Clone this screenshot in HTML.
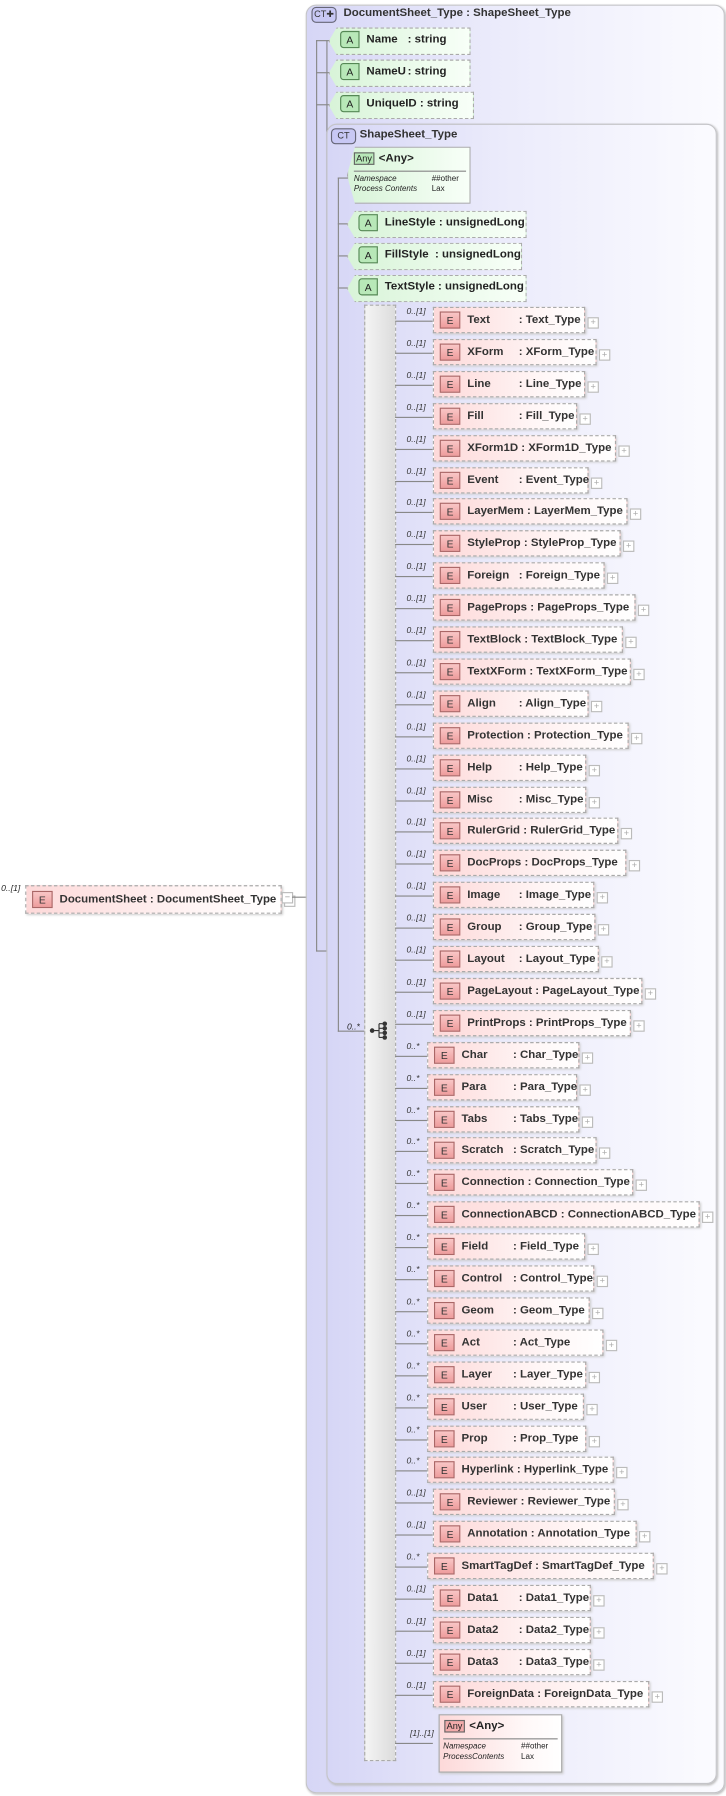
<!DOCTYPE html>
<html><head><meta charset="utf-8"><style>
html,body{margin:0;padding:0;background:#fff;width:726px;height:1795px;overflow:hidden}
#st{position:absolute;left:0;top:0;width:634px;height:1568px;transform:scale(1.14511);transform-origin:0 0;font-family:"Liberation Sans",Arial,sans-serif;color:#222}
.bx{position:absolute;border:1px solid #c4c4c8;border-radius:9px;background:linear-gradient(90deg,#d6d6f6 0%,#ebebfb 45%,#fbfbff 100%);box-shadow:1px 1px 2px #bbb}
.ct{position:absolute;width:20px;height:12px;border:1px solid #667;border-radius:4px;background:#c8c8f4;font-size:8px;line-height:12px;text-align:center;color:#333}
.t{position:absolute;font-weight:bold;font-size:10px;white-space:nowrap;color:#333}
.ln{position:absolute;background:#888}
.at{position:absolute;height:22px;background:linear-gradient(90deg,#d8f4d8,#f8fff8);border:1px dashed #aaa;box-shadow:1px 1px 2px #ccc;font-weight:bold;font-size:10px;line-height:20px;white-space:nowrap;clip-path:polygon(7px 0,100% 0,100% 100%,7px 100%,0 50%)}
.ai{display:inline-block;width:15px;height:13px;border:1px solid #585;background:#b8e8b8;text-align:center;font-size:9px;line-height:14px;font-weight:normal;vertical-align:middle;margin:0 6px 0 9px;border-radius:3px 0 0 3px}
.an{display:inline-block;min-width:34px}
.r{position:absolute;left:345px;height:22px;width:280px}
.r:before{content:'';position:absolute;left:0;top:12px;width:33px;border-top:1px solid #888}
.r i{position:absolute;top:-1px;font-size:7.5px;font-style:italic;color:#333;white-space:nowrap}
.e{position:absolute;top:0;height:21px;background:linear-gradient(90deg,#fdd9d9,#fff6f6 70%,#fff);border:1px dashed #aaa;box-shadow:1px 1px 2px #ccc;font-weight:bold;font-size:10px;line-height:21px;white-space:nowrap;color:#333}
.e:after{content:'+';position:absolute;right:-13px;top:8px;width:8px;height:8px;border:1px solid #bbb;background:#fff;font-size:8px;line-height:8px;text-align:center;color:#aaa;font-weight:normal}
.ei{display:inline-block;width:16px;height:13px;border:1px solid #a66;background:linear-gradient(#f9c6c6,#ee9c9c);text-align:center;font-size:9px;line-height:14px;font-weight:normal;vertical-align:middle;margin:0 6px 0 5px;color:#333}
.en{display:inline-block;min-width:45px}
.any{position:absolute;border:1px solid #aaa;box-shadow:1px 1px 2px #ccc;font-size:10px}
.any .h{font-weight:bold;margin:4px 0 0 4px}
.any .k{display:inline-block;border:1px solid #666;font-size:8px;padding:0 1px;margin-right:4px;font-weight:normal}
.any .d{border-top:1px solid #888;margin:5px 3px 0 3px;font-size:7px;padding-top:2px;line-height:9px}
.any .d span{display:inline-block;width:68px;font-style:italic}
</style></head><body><div id="st">

<!-- left element -->
<div style="position:absolute;left:1px;top:771px;font-size:7.5px;font-style:italic">0..[1]</div>
<div class="e" style="left:22px;top:773px;width:222px;height:23px;line-height:23px"><span class="ei">E</span>DocumentSheet : DocumentSheet_Type</div>
<div style="position:absolute;left:246px;top:779px;width:8px;height:8px;border:1px solid #bbb;background:#fff;font-size:8px;line-height:7px;text-align:center;color:#999">−</div>
<div class="ln" style="left:255px;top:783px;width:21px;height:1px"></div>

<!-- outer box -->
<div class="bx" style="left:267px;top:4px;width:364px;height:1560px"></div>
<div class="ct" style="left:272px;top:6px">CT✚</div>
<div class="t" style="left:300px;top:6px">DocumentSheet_Type : ShapeSheet_Type</div>

<div class="ln" style="left:276px;top:35px;width:1px;height:796px"></div>
<div class="ln" style="left:285px;top:35px;width:1px;height:796px"></div>
<div class="ln" style="left:276px;top:830px;width:10px;height:1px"></div>
<div class="ln" style="left:276px;top:35px;width:12px;height:1px"></div>
<div class="ln" style="left:276px;top:63px;width:12px;height:1px"></div>
<div class="ln" style="left:276px;top:91px;width:12px;height:1px"></div>

<div class="at" style="left:287px;top:24px;width:122px"><span class="ai">A</span><span class="an" style="min-width:36px">Name</span>: string</div>
<div class="at" style="left:287px;top:52px;width:122px"><span class="ai">A</span><span class="an" style="min-width:36px">NameU</span>: string</div>
<div class="at" style="left:287px;top:80px;width:125px"><span class="ai">A</span>UniqueID : string</div>

<!-- inner box -->
<div class="bx" style="left:285px;top:108px;width:339px;height:1448px"></div>
<div class="ct" style="left:289px;top:112px">CT</div>
<div class="t" style="left:314px;top:112px">ShapeSheet_Type</div>

<div class="ln" style="left:295px;top:155px;width:1px;height:746px"></div>
<div class="ln" style="left:295px;top:155px;width:9px;height:1px"></div>
<div class="ln" style="left:295px;top:195px;width:9px;height:1px"></div>
<div class="ln" style="left:295px;top:223px;width:9px;height:1px"></div>
<div class="ln" style="left:295px;top:251px;width:9px;height:1px"></div>
<div class="ln" style="left:295px;top:900px;width:28px;height:1px"></div>
<div style="position:absolute;left:303px;top:892px;font-size:7.5px;font-style:italic">0..*</div>

<div class="any" style="left:303px;top:128px;width:106px;height:48px;background:linear-gradient(90deg,#d8f4d8,#f8fff8);clip-path:polygon(7px 0,100% 0,100% 100%,7px 100%,0 50%)">
<div class="h" style="margin-left:5px"><span class="k" style="background:#b8e8b8">Any</span>&lt;Any&gt;</div>
<div class="d" style="margin-left:5px"><span>Namespace</span>##other<br><span>Process Contents</span>Lax</div></div>

<div class="at" style="left:303px;top:184px;width:155px"><span class="ai">A</span>LineStyle : unsignedLong</div>
<div class="at" style="left:303px;top:212px;width:151px"><span class="ai">A</span>FillStyle&nbsp; : unsignedLong</div>
<div class="at" style="left:303px;top:240px;width:155px"><span class="ai">A</span>TextStyle : unsignedLong</div>

<!-- sequence bar -->
<div style="position:absolute;left:318px;top:266px;width:26px;height:1270px;border:1px dashed #aaa;background:linear-gradient(90deg,#f4f4f4,#dcdcdc)"></div>
<svg style="position:absolute;left:322px;top:891px" width="20" height="18" viewBox="0 0 20 18"><circle cx="3" cy="9" r="2" fill="#333"/><path d="M5 9H9M9 3V15M9 3H12M9 7H12M9 11H12M9 15H12" stroke="#333" fill="none"/><circle cx="14" cy="3" r="2" fill="#333"/><circle cx="14" cy="7" r="2" fill="#333"/><circle cx="14" cy="11" r="2" fill="#333"/><circle cx="14" cy="15" r="2" fill="#333"/></svg>

<div class="r" style="top:268px"><i style="left:10px">0..[1]</i><div class="e" style="left:33px;width:131px"><span class="ei">E</span><span class="en">Text</span>: Text_Type</div></div>
<div class="r" style="top:296px"><i style="left:10px">0..[1]</i><div class="e" style="left:33px;width:141px"><span class="ei">E</span><span class="en">XForm</span>: XForm_Type</div></div>
<div class="r" style="top:324px"><i style="left:10px">0..[1]</i><div class="e" style="left:33px;width:131px"><span class="ei">E</span><span class="en">Line</span>: Line_Type</div></div>
<div class="r" style="top:352px"><i style="left:10px">0..[1]</i><div class="e" style="left:33px;width:124px"><span class="ei">E</span><span class="en">Fill</span>: Fill_Type</div></div>
<div class="r" style="top:380px"><i style="left:10px">0..[1]</i><div class="e" style="left:33px;width:158px"><span class="ei">E</span>XForm1D : XForm1D_Type</div></div>
<div class="r" style="top:408px"><i style="left:10px">0..[1]</i><div class="e" style="left:33px;width:134px"><span class="ei">E</span><span class="en">Event</span>: Event_Type</div></div>
<div class="r" style="top:435px"><i style="left:10px">0..[1]</i><div class="e" style="left:33px;width:168px"><span class="ei">E</span>LayerMem : LayerMem_Type</div></div>
<div class="r" style="top:463px"><i style="left:10px">0..[1]</i><div class="e" style="left:33px;width:162px"><span class="ei">E</span>StyleProp : StyleProp_Type</div></div>
<div class="r" style="top:491px"><i style="left:10px">0..[1]</i><div class="e" style="left:33px;width:148px"><span class="ei">E</span><span class="en">Foreign</span>: Foreign_Type</div></div>
<div class="r" style="top:519px"><i style="left:10px">0..[1]</i><div class="e" style="left:33px;width:175px"><span class="ei">E</span>PageProps : PageProps_Type</div></div>
<div class="r" style="top:547px"><i style="left:10px">0..[1]</i><div class="e" style="left:33px;width:164px"><span class="ei">E</span>TextBlock : TextBlock_Type</div></div>
<div class="r" style="top:575px"><i style="left:10px">0..[1]</i><div class="e" style="left:33px;width:171px"><span class="ei">E</span>TextXForm : TextXForm_Type</div></div>
<div class="r" style="top:603px"><i style="left:10px">0..[1]</i><div class="e" style="left:33px;width:134px"><span class="ei">E</span><span class="en">Align</span>: Align_Type</div></div>
<div class="r" style="top:631px"><i style="left:10px">0..[1]</i><div class="e" style="left:33px;width:169px"><span class="ei">E</span>Protection : Protection_Type</div></div>
<div class="r" style="top:659px"><i style="left:10px">0..[1]</i><div class="e" style="left:33px;width:132px"><span class="ei">E</span><span class="en">Help</span>: Help_Type</div></div>
<div class="r" style="top:687px"><i style="left:10px">0..[1]</i><div class="e" style="left:33px;width:132px"><span class="ei">E</span><span class="en">Misc</span>: Misc_Type</div></div>
<div class="r" style="top:714px"><i style="left:10px">0..[1]</i><div class="e" style="left:33px;width:160px"><span class="ei">E</span>RulerGrid : RulerGrid_Type</div></div>
<div class="r" style="top:742px"><i style="left:10px">0..[1]</i><div class="e" style="left:33px;width:167px"><span class="ei">E</span>DocProps : DocProps_Type</div></div>
<div class="r" style="top:770px"><i style="left:10px">0..[1]</i><div class="e" style="left:33px;width:139px"><span class="ei">E</span><span class="en">Image</span>: Image_Type</div></div>
<div class="r" style="top:798px"><i style="left:10px">0..[1]</i><div class="e" style="left:33px;width:140px"><span class="ei">E</span><span class="en">Group</span>: Group_Type</div></div>
<div class="r" style="top:826px"><i style="left:10px">0..[1]</i><div class="e" style="left:33px;width:143px"><span class="ei">E</span><span class="en">Layout</span>: Layout_Type</div></div>
<div class="r" style="top:854px"><i style="left:10px">0..[1]</i><div class="e" style="left:33px;width:181px"><span class="ei">E</span>PageLayout : PageLayout_Type</div></div>
<div class="r" style="top:882px"><i style="left:10px">0..[1]</i><div class="e" style="left:33px;width:171px"><span class="ei">E</span>PrintProps : PrintProps_Type</div></div>
<div class="r" style="top:910px"><i style="left:10px">0..*</i><div class="e" style="left:28px;width:131px"><span class="ei">E</span><span class="en">Char</span>: Char_Type</div></div>
<div class="r" style="top:938px"><i style="left:10px">0..*</i><div class="e" style="left:28px;width:129px"><span class="ei">E</span><span class="en">Para</span>: Para_Type</div></div>
<div class="r" style="top:966px"><i style="left:10px">0..*</i><div class="e" style="left:28px;width:131px"><span class="ei">E</span><span class="en">Tabs</span>: Tabs_Type</div></div>
<div class="r" style="top:993px"><i style="left:10px">0..*</i><div class="e" style="left:28px;width:146px"><span class="ei">E</span><span class="en">Scratch</span>: Scratch_Type</div></div>
<div class="r" style="top:1021px"><i style="left:10px">0..*</i><div class="e" style="left:28px;width:178px"><span class="ei">E</span>Connection : Connection_Type</div></div>
<div class="r" style="top:1049px"><i style="left:10px">0..*</i><div class="e" style="left:28px;width:236px"><span class="ei">E</span>ConnectionABCD : ConnectionABCD_Type</div></div>
<div class="r" style="top:1077px"><i style="left:10px">0..*</i><div class="e" style="left:28px;width:136px"><span class="ei">E</span><span class="en">Field</span>: Field_Type</div></div>
<div class="r" style="top:1105px"><i style="left:10px">0..*</i><div class="e" style="left:28px;width:144px"><span class="ei">E</span><span class="en">Control</span>: Control_Type</div></div>
<div class="r" style="top:1133px"><i style="left:10px">0..*</i><div class="e" style="left:28px;width:140px"><span class="ei">E</span><span class="en">Geom</span>: Geom_Type</div></div>
<div class="r" style="top:1161px"><i style="left:10px">0..*</i><div class="e" style="left:28px;width:152px"><span class="ei">E</span><span class="en">Act</span>: Act_Type</div></div>
<div class="r" style="top:1189px"><i style="left:10px">0..*</i><div class="e" style="left:28px;width:137px"><span class="ei">E</span><span class="en">Layer</span>: Layer_Type</div></div>
<div class="r" style="top:1217px"><i style="left:10px">0..*</i><div class="e" style="left:28px;width:135px"><span class="ei">E</span><span class="en">User</span>: User_Type</div></div>
<div class="r" style="top:1245px"><i style="left:10px">0..*</i><div class="e" style="left:28px;width:137px"><span class="ei">E</span><span class="en">Prop</span>: Prop_Type</div></div>
<div class="r" style="top:1272px"><i style="left:10px">0..*</i><div class="e" style="left:28px;width:161px"><span class="ei">E</span>Hyperlink : Hyperlink_Type</div></div>
<div class="r" style="top:1300px"><i style="left:10px">0..[1]</i><div class="e" style="left:33px;width:157px"><span class="ei">E</span>Reviewer : Reviewer_Type</div></div>
<div class="r" style="top:1328px"><i style="left:10px">0..[1]</i><div class="e" style="left:33px;width:176px"><span class="ei">E</span>Annotation : Annotation_Type</div></div>
<div class="r" style="top:1356px"><i style="left:10px">0..*</i><div class="e" style="left:28px;width:196px"><span class="ei">E</span>SmartTagDef : SmartTagDef_Type</div></div>
<div class="r" style="top:1384px"><i style="left:10px">0..[1]</i><div class="e" style="left:33px;width:136px"><span class="ei">E</span><span class="en">Data1</span>: Data1_Type</div></div>
<div class="r" style="top:1412px"><i style="left:10px">0..[1]</i><div class="e" style="left:33px;width:136px"><span class="ei">E</span><span class="en">Data2</span>: Data2_Type</div></div>
<div class="r" style="top:1440px"><i style="left:10px">0..[1]</i><div class="e" style="left:33px;width:136px"><span class="ei">E</span><span class="en">Data3</span>: Data3_Type</div></div>
<div class="r" style="top:1468px"><i style="left:10px">0..[1]</i><div class="e" style="left:33px;width:187px"><span class="ei">E</span>ForeignData : ForeignData_Type</div></div>

<div class="r" style="top:1510px"><i style="left:13px">[1]..[1]</i></div>
<div class="any" style="left:383px;top:1497px;width:106px;height:49px;background:linear-gradient(90deg,#fdd9d9,#fff8f8 70%,#fff)">
<div class="h"><span class="k" style="background:#f2aaaa">Any</span>&lt;Any&gt;</div>
<div class="d"><span>Namespace</span>##other<br><span>ProcessContents</span>Lax</div></div>

</div></body></html>
